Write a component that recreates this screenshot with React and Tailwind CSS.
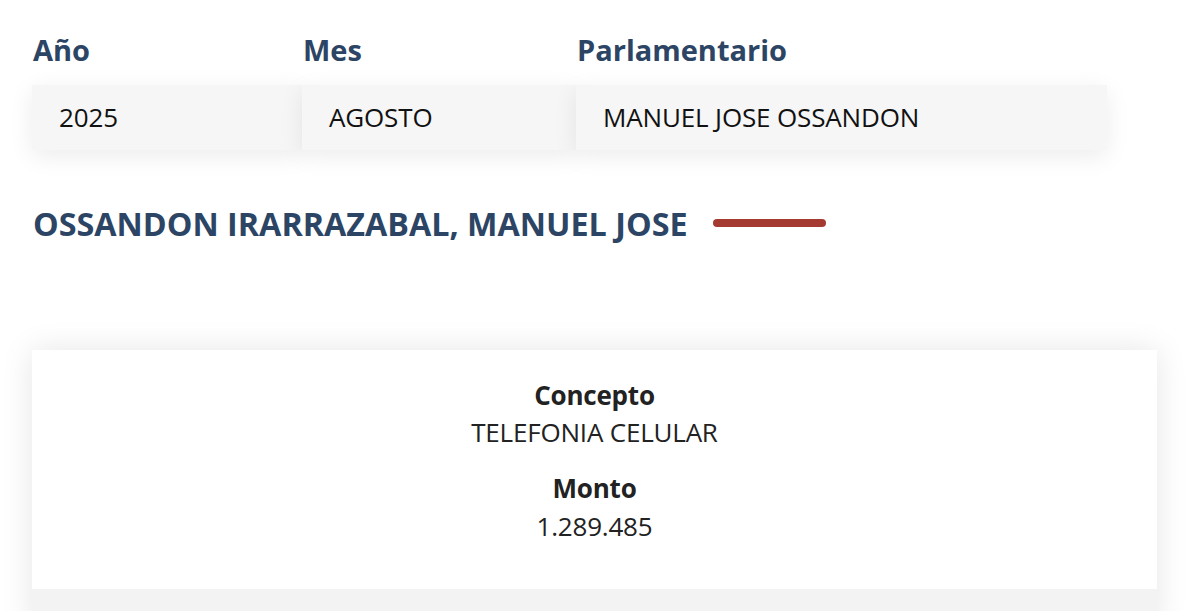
export default function App() {
  const fields = [
    { label: 'Año', value: '2025', w: 'w-[270px]' },
    { label: 'Mes', value: 'AGOSTO', w: 'w-[274px]' },
    { label: 'Parlamentario', value: 'MANUEL JOSE OSSANDON', w: 'w-[531px]' },
  ]

  return (
    <div className="min-h-screen bg-white font-['Open_Sans',sans-serif] overflow-hidden">
      <div className="pl-[32px] pr-[42px]">
        {/* filtros */}
        <div className="flex pt-[28px]">
          {fields.map((f) => (
            <div key={f.label} className={`${f.w} flex flex-col`}>
              <label className="pl-[1px] text-[29px] font-bold leading-[44px] text-[#2c4564]">{f.label}</label>
              <div className="mt-[13px] h-[65px] flex items-center px-[27px] bg-[#f6f6f6] shadow-[0_6px_24px_rgba(0,0,0,0.08)] text-[26px] tracking-[-0.15px] text-[#111]">
                {f.value}
              </div>
            </div>
          ))}
        </div>

        {/* nombre */}
        <div className="mt-[51px] flex items-center gap-[25px]">
          <h2 className="pl-[1px] text-[32.3px] font-bold leading-[44px] text-[#2c4564]">
            OSSANDON IRARRAZABAL, MANUEL JOSE
          </h2>
          <span className="block w-[113px] h-[8px] rounded-full bg-[#a53a32]" />
        </div>

        {/* detalle */}
        <div className="mt-[105px] w-[1125px] shadow-[0_0_30px_rgba(0,0,0,0.1)]">
          <div className="bg-white h-[239px] flex flex-col items-center pt-[28px] text-[26px] tracking-[-0.2px] text-[#222]">
            <div className="font-bold leading-[34px]">Concepto</div>
            <div className="leading-[40px]">TELEFONIA CELULAR</div>
            <div className="mt-[19px] font-bold leading-[34px]">Monto</div>
            <div className="leading-[42px]">1.289.485</div>
          </div>
          <div className="bg-[#f3f3f3] h-[40px]" />
        </div>
      </div>
    </div>
  )
}
